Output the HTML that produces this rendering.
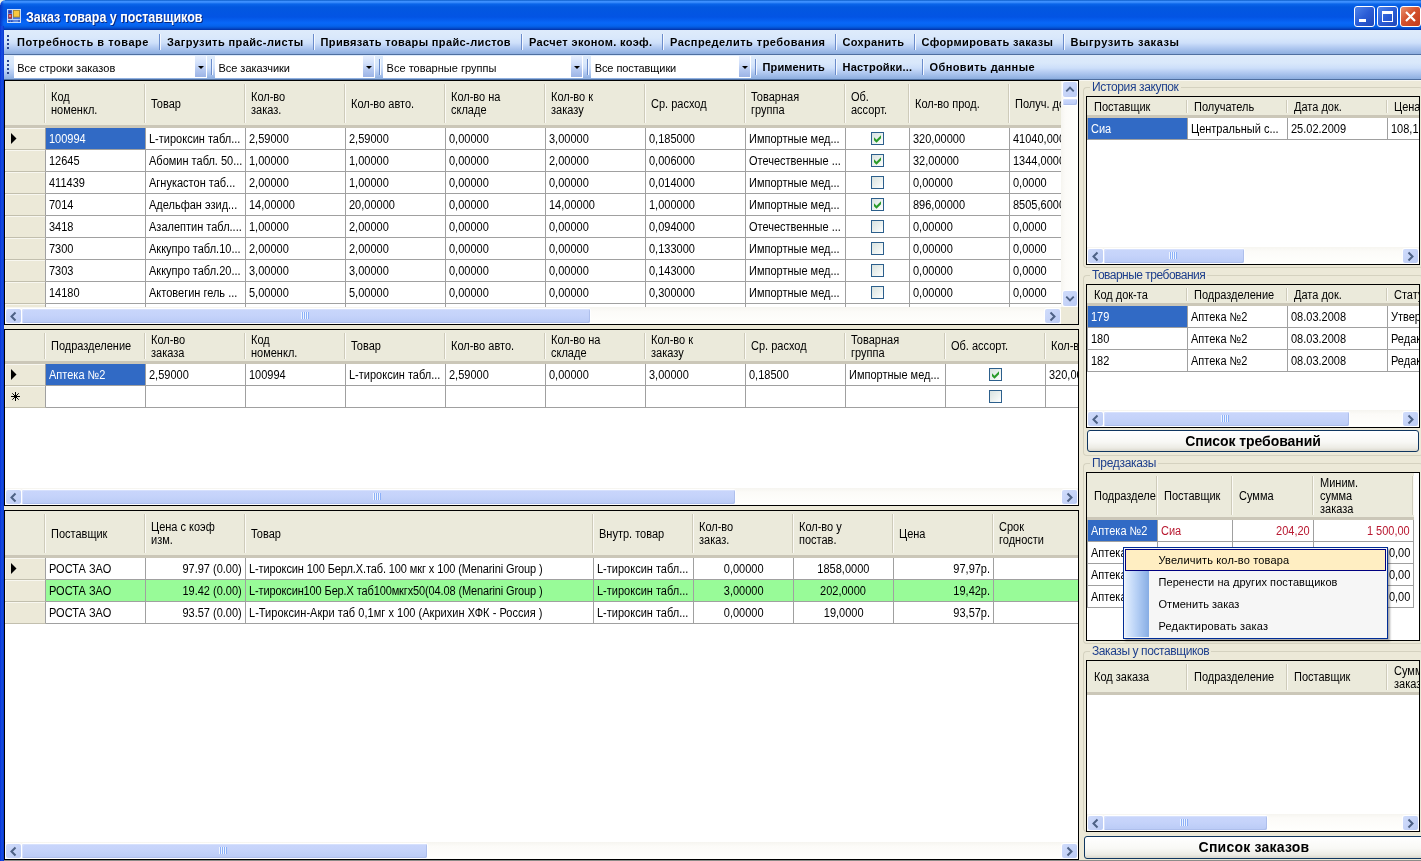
<!DOCTYPE html><html lang="ru"><head><meta charset="utf-8"><title>Заказ товара у поставщиков</title><style>
*{box-sizing:border-box;margin:0;padding:0}
html,body{width:1421px;height:861px;overflow:hidden;background:#ECE9D8}
body{position:relative;font-family:"Liberation Sans",sans-serif;font-size:11px;color:#000;line-height:13px}
.abs{position:absolute}
.sx{display:inline-block;font-size:12px;transform:scaleX(.9167);transform-origin:0 50%;white-space:inherit}
.r>.sx{transform-origin:100% 50%}
.m>.sx{transform-origin:50% 50%}
#w{position:absolute;left:0;top:0;width:1421px;height:861px;overflow:hidden;will-change:transform}
#title{left:0;top:0;width:1421px;height:30px;background:linear-gradient(to bottom,#0A5CC8 0,#3D90FF 1.5px,#3488FA 2.5px,#0A66EA 4px,#0258E0 7px,#0354E4 17px,#0868F8 23px,#0563EC 26px,#0450D0 28px,#0238B0 29.5px,#0238B0 30px)}
#title .txt{left:26px;top:9px;color:#fff;font-weight:bold;font-size:14px;line-height:17px;text-shadow:1px 1px 0 #0A2A80;white-space:nowrap;transform-origin:0 0}
#lb{left:0;top:26px;width:4px;height:835px;background:linear-gradient(to right,#0831D9 0,#1650E0 50%,#0A34D0 100%)}
.tb{left:4px;width:1417px;height:25px;background:linear-gradient(to bottom,#DEEBFB 0,#D9E8FB 8px,#CDDFFA 13px,#B5CCF2 17px,#9EBBE8 21px,#8DAEDF 24px,#4F6FA0 24px,#4F6FA0 25px)}
.tbi{font-weight:bold;white-space:nowrap;top:0;height:24px;line-height:24px;font-size:11px;transform-origin:0 50%}
.sep{width:2px;height:16px;top:4px;background:linear-gradient(to right,#6A8CCB 0,#6A8CCB 50%,#F4F8FF 50%,#F4F8FF 100%)}
.grip{width:2px;height:14px;left:3px;top:5px;background:repeating-linear-gradient(to bottom,#27418C 0,#27418C 2px,transparent 2px,transparent 4px)}
.grip:after{content:"";position:absolute;left:1px;top:1px;width:2px;height:14px;background:repeating-linear-gradient(to bottom,#F0F6FF 0,#F0F6FF 2px,transparent 2px,transparent 4px);z-index:-1}
.combo{top:1px;height:22px;background:#fff;line-height:25px;padding-left:4px;white-space:nowrap;font-size:11px}
.combo .btn{right:1px;top:0;width:11px;height:21px;background:linear-gradient(to bottom,#E6EFFE 0,#D2E0FA 35%,#B4C8F0 65%,#9CB4E6 100%);}
.combo .btn:after{content:"";position:absolute;left:3px;top:10px;border:3px solid transparent;border-top:3px solid #000;border-bottom:0}
.grid{background:#fff;border:1px solid #000;overflow:hidden}
.hdr{background:#EBEADB;border-bottom:3px solid;border-image:linear-gradient(to bottom,#E2DECD 0,#E2DECD 33%,#D6D2C2 33%,#D6D2C2 66%,#CBC7B8 66%,#CBC7B8 100%) 3;}
.hc{top:0;display:flex;align-items:center;padding:2px 0 0 5px;white-space:pre-line;overflow:hidden;line-height:13px}
.hc:after{content:"";position:absolute;right:0;top:3px;bottom:2px;width:2px;background:linear-gradient(to right,#CECBBA 0,#CECBBA 50%,#FBFAF5 50%,#FBFAF5 100%)}
.rh{background:#ECE9D8;border-right:1px solid #A0A0A0;border-bottom:1px solid #C2BFAE;box-shadow:inset 1px 1px 0 #F8F7F0}
.c{border-right:1px solid #A0A0A0;border-bottom:1px solid #A0A0A0;white-space:nowrap;overflow:hidden;padding:0 3px 0 3px;background:#fff}
.c.sel{background:#316AC5;color:#fff}
.c.r{text-align:right}
.c.m{text-align:center}
.c.g{background:#98FB98}
.c.w{letter-spacing:-0.05px}
.c.red{color:#B81830}
.cb{width:13px;height:13px;border:1px solid #2C5F8C;background:linear-gradient(135deg,#D8E2E0 0,#EEF3F1 60%,#fff 100%)}
.sb{background:linear-gradient(to bottom,#F6F5F0 0,#FCFBF8 25%,#FFFFFD 100%)}
.sb .a{width:15px;height:14px;top:2px;background:linear-gradient(135deg,#D0DCFB 0,#C4D2F7 60%,#BBCBF4 100%);border-radius:2px;box-shadow:0 0 0 1px #fff;display:flex;align-items:center;justify-content:center;overflow:hidden}
.sb .t{top:2px;height:14px;background:linear-gradient(to bottom,#C9D6FB 0,#C5D3FA 45%,#BACBF6 100%);border-radius:2px;box-shadow:0 0 0 1px #fff,inset -1px -1px 0 #AEBFEC,inset 1px 1px 0 #D6E0FC}
.sb.vsb{background:linear-gradient(to right,#F6F5F0 0,#FCFBF8 25%,#FFFFFD 100%)}
.sb.vsb .a{width:14px;height:15px;left:2px}
.sb.vsb .t{left:2px;width:14px}
.gbt{margin-top:1px;font-size:12px;color:#1E3F8C;white-space:nowrap;background:#ECE9D8;padding:0 2px;line-height:13px}
.gb{border:1px solid #D5D2C0;border-radius:4px;border-right:0}
.xb{height:23px;border:1px solid #0F3660;border-radius:3px;background:linear-gradient(to bottom,#fff 0,#F8F8F5 55%,#ECEBE4 85%,#DAD7CC 100%);font-weight:bold;font-size:14px;text-align:center;line-height:21px;white-space:nowrap}
</style></head><body><div id="w">
<div id="title" class="abs">
<svg class="abs" style="left:7px;top:9px" width="14" height="14" viewBox="0 0 14 14"><rect x="0.5" y="0.5" width="13" height="13" fill="#4A78E0" stroke="#C8DCF8"/><path d="M5.5 1V10M1 10.5H13" stroke="#BCD2F6" stroke-width="1" fill="none"/><rect x="1.5" y="1.5" width="3" height="2.5" fill="#3838A0"/><rect x="1.3" y="5" width="3.6" height="4.6" fill="#A83030"/><rect x="2.2" y="6" width="1.6" height="2.2" fill="#F09898"/><rect x="6.5" y="1.5" width="6" height="6.5" fill="#F8C840" stroke="#A88A28" stroke-width="0.8"/><rect x="1.5" y="11.5" width="1.5" height="1.4" fill="#2848A8"/><rect x="4" y="11.5" width="1.5" height="1.4" fill="#2848A8"/><rect x="6.5" y="11.5" width="4.5" height="1.4" fill="#6C90E0"/><rect x="11.6" y="10.8" width="0.9" height="2.2" fill="#2848A8"/></svg>
<div class="abs txt" id="ttxt" style="transform:scaleX(0.8916)">Заказ товара у поставщиков</div>
<div class="abs" style="left:1354px;top:6px;width:21px;height:21px;border:1px solid #fff;border-radius:3px;background:linear-gradient(135deg,#4F84EA 0,#2A5CD6 50%,#2048B8 100%)"><div class="abs" style="left:4px;top:12px;width:7px;height:3px;background:#fff"></div></div>
<div class="abs" style="left:1377px;top:6px;width:21px;height:21px;border:1px solid #fff;border-radius:3px;background:linear-gradient(135deg,#4F84EA 0,#2A5CD6 50%,#2048B8 100%)"><div class="abs" style="left:4px;top:4px;width:11px;height:11px;border:1px solid #fff;border-top:3px solid #fff"></div></div>
<div class="abs" style="left:1400px;top:6px;width:21px;height:21px;border:1px solid #fff;border-radius:3px;background:linear-gradient(135deg,#E9906E 0,#D4522E 45%,#C23A1C 100%)"><svg class="abs" style="left:0;top:0" width="19" height="19" viewBox="0 0 19 19"><path d="M5 5 L14 14 M14 5 L5 14" stroke="#fff" stroke-width="2.2" stroke-linecap="butt"/></svg></div>
</div>
<div class="abs" style="left:0;top:0;width:4px;height:30px;background:linear-gradient(to right,rgba(8,49,190,.9) 0,rgba(8,49,200,.35) 60%,rgba(8,49,217,0) 100%)"></div>
<div id="lb" class="abs"></div>
<div class="abs" style="left:0;top:0;width:5px;height:5px;background:radial-gradient(circle at 100% 100%,rgba(255,255,255,0) 4.2px,#EEF4EA 5.2px)"></div>
<div class="abs tb" style="top:30px">
<div class="abs grip"></div>
<div class="abs tbi" style="left:13.0px;letter-spacing:0.544px">Потребность в товаре</div>
<div class="abs sep" style="left:155px"></div>
<div class="abs tbi" style="left:163.0px;letter-spacing:0.393px">Загрузить прайс-листы</div>
<div class="abs sep" style="left:309px"></div>
<div class="abs tbi" style="left:316.5px;letter-spacing:0.377px">Привязать товары прайс-листов</div>
<div class="abs sep" style="left:517px"></div>
<div class="abs tbi" style="left:525.0px;letter-spacing:0.362px">Расчет эконом. коэф.</div>
<div class="abs sep" style="left:658px"></div>
<div class="abs tbi" style="left:666.0px;letter-spacing:0.451px">Распределить требования</div>
<div class="abs sep" style="left:831px"></div>
<div class="abs tbi" style="left:838.5px;letter-spacing:0.322px">Сохранить</div>
<div class="abs sep" style="left:910px"></div>
<div class="abs tbi" style="left:917.5px;letter-spacing:0.362px">Сформировать заказы</div>
<div class="abs sep" style="left:1059px"></div>
<div class="abs tbi" style="left:1066.5px;letter-spacing:0.564px">Выгрузить заказы</div>
</div>
<div class="abs tb" style="top:55px">
<div class="abs grip"></div>
<div class="abs combo" style="left:10px;width:193px;padding-left:3.2px;letter-spacing:0.012px">Все строки заказов<div class="abs btn"></div></div>
<div class="abs sep" style="left:207px"></div>
<div class="abs combo" style="left:211px;width:160px;padding-left:3.4px;letter-spacing:-0.010px">Все заказчики<div class="abs btn"></div></div>
<div class="abs sep" style="left:375px"></div>
<div class="abs combo" style="left:379px;width:200px;padding-left:3.6px;letter-spacing:0.017px">Все товарные группы<div class="abs btn"></div></div>
<div class="abs sep" style="left:583px"></div>
<div class="abs combo" style="left:587px;width:160px;padding-left:3.7px;letter-spacing:-0.080px">Все поставщики<div class="abs btn"></div></div>
<div class="abs sep" style="left:751px"></div>
<div class="abs tbi" style="left:758.5px;letter-spacing:0.144px">Применить</div>
<div class="abs sep" style="left:831px"></div>
<div class="abs tbi" style="left:838.5px;letter-spacing:0.225px">Настройки...</div>
<div class="abs sep" style="left:918px"></div>
<div class="abs tbi" style="left:925.5px;letter-spacing:0.410px">Обновить данные</div>
</div>
<div class="abs grid" style="left:4px;top:80px;width:1075px;height:245px">
<div class="abs hdr" style="left:0;top:0;width:1073px;height:47px">
<div class="abs hc" style="left:0;width:41px;height:44px"></div>
<div class="abs hc" style="left:41px;width:100px;height:44px"><span class="sx">Код
номенкл.</span></div>
<div class="abs hc" style="left:141px;width:100px;height:44px"><span class="sx">Товар</span></div>
<div class="abs hc" style="left:241px;width:100px;height:44px"><span class="sx">Кол-во
заказ.</span></div>
<div class="abs hc" style="left:341px;width:100px;height:44px"><span class="sx">Кол-во авто.</span></div>
<div class="abs hc" style="left:441px;width:100px;height:44px"><span class="sx">Кол-во на
складе</span></div>
<div class="abs hc" style="left:541px;width:100px;height:44px"><span class="sx">Кол-во к
заказу</span></div>
<div class="abs hc" style="left:641px;width:100px;height:44px"><span class="sx">Ср. расход</span></div>
<div class="abs hc" style="left:741px;width:100px;height:44px"><span class="sx">Товарная
группа</span></div>
<div class="abs hc" style="left:841px;width:64px;height:44px"><span class="sx">Об.
ассорт.</span></div>
<div class="abs hc" style="left:905px;width:100px;height:44px"><span class="sx">Кол-во прод.</span></div>
<div class="abs hc" style="left:1005px;width:100px;height:44px"><span class="sx">Получ. до</span></div>
</div>
<div class="abs rh" style="left:0;top:47px;width:41px;height:22px"><svg class="abs" style="left:6px;top:5px" width="6" height="11" viewBox="0 0 6 11"><path d="M0 0 L5.5 5.5 L0 11 Z" fill="#000"/></svg></div>
<div class="abs c sel" style="left:41px;top:47px;width:100px;height:22px;line-height:22px"><span class="sx">100994</span></div>
<div class="abs c" style="left:141px;top:47px;width:100px;height:22px;line-height:22px"><span class="sx">L-тироксин табл...</span></div>
<div class="abs c" style="left:241px;top:47px;width:100px;height:22px;line-height:22px"><span class="sx">2,59000</span></div>
<div class="abs c" style="left:341px;top:47px;width:100px;height:22px;line-height:22px"><span class="sx">2,59000</span></div>
<div class="abs c" style="left:441px;top:47px;width:100px;height:22px;line-height:22px"><span class="sx">0,00000</span></div>
<div class="abs c" style="left:541px;top:47px;width:100px;height:22px;line-height:22px"><span class="sx">3,00000</span></div>
<div class="abs c" style="left:641px;top:47px;width:100px;height:22px;line-height:22px"><span class="sx">0,185000</span></div>
<div class="abs c" style="left:741px;top:47px;width:100px;height:22px;line-height:22px"><span class="sx">Импортные мед...</span></div>
<div class="abs c" style="left:841px;top:47px;width:64px;height:22px;line-height:22px"><div class="abs cb" style="left:25px;top:4px"><svg class="abs" style="left:2px;top:2px" width="7" height="8" viewBox="0 0 7 8"><path d="M0 2.3 L2.5 4.8 L7 0.3 L7 3.3 L2.5 7.8 L0 5.3 Z" fill="#2A9A2A"/></svg></div></div>
<div class="abs c" style="left:905px;top:47px;width:100px;height:22px;line-height:22px"><span class="sx">320,00000</span></div>
<div class="abs c" style="left:1005px;top:47px;width:100px;height:22px;line-height:22px"><span class="sx">41040,0000</span></div>
<div class="abs rh" style="left:0;top:69px;width:41px;height:22px"></div>
<div class="abs c" style="left:41px;top:69px;width:100px;height:22px;line-height:22px"><span class="sx">12645</span></div>
<div class="abs c" style="left:141px;top:69px;width:100px;height:22px;line-height:22px"><span class="sx">Абомин табл. 50...</span></div>
<div class="abs c" style="left:241px;top:69px;width:100px;height:22px;line-height:22px"><span class="sx">1,00000</span></div>
<div class="abs c" style="left:341px;top:69px;width:100px;height:22px;line-height:22px"><span class="sx">1,00000</span></div>
<div class="abs c" style="left:441px;top:69px;width:100px;height:22px;line-height:22px"><span class="sx">0,00000</span></div>
<div class="abs c" style="left:541px;top:69px;width:100px;height:22px;line-height:22px"><span class="sx">2,00000</span></div>
<div class="abs c" style="left:641px;top:69px;width:100px;height:22px;line-height:22px"><span class="sx">0,006000</span></div>
<div class="abs c" style="left:741px;top:69px;width:100px;height:22px;line-height:22px"><span class="sx">Отечественные ...</span></div>
<div class="abs c" style="left:841px;top:69px;width:64px;height:22px;line-height:22px"><div class="abs cb" style="left:25px;top:4px"><svg class="abs" style="left:2px;top:2px" width="7" height="8" viewBox="0 0 7 8"><path d="M0 2.3 L2.5 4.8 L7 0.3 L7 3.3 L2.5 7.8 L0 5.3 Z" fill="#2A9A2A"/></svg></div></div>
<div class="abs c" style="left:905px;top:69px;width:100px;height:22px;line-height:22px"><span class="sx">32,00000</span></div>
<div class="abs c" style="left:1005px;top:69px;width:100px;height:22px;line-height:22px"><span class="sx">1344,0000</span></div>
<div class="abs rh" style="left:0;top:91px;width:41px;height:22px"></div>
<div class="abs c" style="left:41px;top:91px;width:100px;height:22px;line-height:22px"><span class="sx">411439</span></div>
<div class="abs c" style="left:141px;top:91px;width:100px;height:22px;line-height:22px"><span class="sx">Агнукастон таб...</span></div>
<div class="abs c" style="left:241px;top:91px;width:100px;height:22px;line-height:22px"><span class="sx">2,00000</span></div>
<div class="abs c" style="left:341px;top:91px;width:100px;height:22px;line-height:22px"><span class="sx">1,00000</span></div>
<div class="abs c" style="left:441px;top:91px;width:100px;height:22px;line-height:22px"><span class="sx">0,00000</span></div>
<div class="abs c" style="left:541px;top:91px;width:100px;height:22px;line-height:22px"><span class="sx">0,00000</span></div>
<div class="abs c" style="left:641px;top:91px;width:100px;height:22px;line-height:22px"><span class="sx">0,014000</span></div>
<div class="abs c" style="left:741px;top:91px;width:100px;height:22px;line-height:22px"><span class="sx">Импортные мед...</span></div>
<div class="abs c" style="left:841px;top:91px;width:64px;height:22px;line-height:22px"><div class="abs cb" style="left:25px;top:4px"></div></div>
<div class="abs c" style="left:905px;top:91px;width:100px;height:22px;line-height:22px"><span class="sx">0,00000</span></div>
<div class="abs c" style="left:1005px;top:91px;width:100px;height:22px;line-height:22px"><span class="sx">0,0000</span></div>
<div class="abs rh" style="left:0;top:113px;width:41px;height:22px"></div>
<div class="abs c" style="left:41px;top:113px;width:100px;height:22px;line-height:22px"><span class="sx">7014</span></div>
<div class="abs c" style="left:141px;top:113px;width:100px;height:22px;line-height:22px"><span class="sx">Адельфан эзид...</span></div>
<div class="abs c" style="left:241px;top:113px;width:100px;height:22px;line-height:22px"><span class="sx">14,00000</span></div>
<div class="abs c" style="left:341px;top:113px;width:100px;height:22px;line-height:22px"><span class="sx">20,00000</span></div>
<div class="abs c" style="left:441px;top:113px;width:100px;height:22px;line-height:22px"><span class="sx">0,00000</span></div>
<div class="abs c" style="left:541px;top:113px;width:100px;height:22px;line-height:22px"><span class="sx">14,00000</span></div>
<div class="abs c" style="left:641px;top:113px;width:100px;height:22px;line-height:22px"><span class="sx">1,000000</span></div>
<div class="abs c" style="left:741px;top:113px;width:100px;height:22px;line-height:22px"><span class="sx">Импортные мед...</span></div>
<div class="abs c" style="left:841px;top:113px;width:64px;height:22px;line-height:22px"><div class="abs cb" style="left:25px;top:4px"><svg class="abs" style="left:2px;top:2px" width="7" height="8" viewBox="0 0 7 8"><path d="M0 2.3 L2.5 4.8 L7 0.3 L7 3.3 L2.5 7.8 L0 5.3 Z" fill="#2A9A2A"/></svg></div></div>
<div class="abs c" style="left:905px;top:113px;width:100px;height:22px;line-height:22px"><span class="sx">896,00000</span></div>
<div class="abs c" style="left:1005px;top:113px;width:100px;height:22px;line-height:22px"><span class="sx">8505,6000</span></div>
<div class="abs rh" style="left:0;top:135px;width:41px;height:22px"></div>
<div class="abs c" style="left:41px;top:135px;width:100px;height:22px;line-height:22px"><span class="sx">3418</span></div>
<div class="abs c" style="left:141px;top:135px;width:100px;height:22px;line-height:22px"><span class="sx">Азалептин табл....</span></div>
<div class="abs c" style="left:241px;top:135px;width:100px;height:22px;line-height:22px"><span class="sx">1,00000</span></div>
<div class="abs c" style="left:341px;top:135px;width:100px;height:22px;line-height:22px"><span class="sx">2,00000</span></div>
<div class="abs c" style="left:441px;top:135px;width:100px;height:22px;line-height:22px"><span class="sx">0,00000</span></div>
<div class="abs c" style="left:541px;top:135px;width:100px;height:22px;line-height:22px"><span class="sx">0,00000</span></div>
<div class="abs c" style="left:641px;top:135px;width:100px;height:22px;line-height:22px"><span class="sx">0,094000</span></div>
<div class="abs c" style="left:741px;top:135px;width:100px;height:22px;line-height:22px"><span class="sx">Отечественные ...</span></div>
<div class="abs c" style="left:841px;top:135px;width:64px;height:22px;line-height:22px"><div class="abs cb" style="left:25px;top:4px"></div></div>
<div class="abs c" style="left:905px;top:135px;width:100px;height:22px;line-height:22px"><span class="sx">0,00000</span></div>
<div class="abs c" style="left:1005px;top:135px;width:100px;height:22px;line-height:22px"><span class="sx">0,0000</span></div>
<div class="abs rh" style="left:0;top:157px;width:41px;height:22px"></div>
<div class="abs c" style="left:41px;top:157px;width:100px;height:22px;line-height:22px"><span class="sx">7300</span></div>
<div class="abs c" style="left:141px;top:157px;width:100px;height:22px;line-height:22px"><span class="sx">Аккупро табл.10...</span></div>
<div class="abs c" style="left:241px;top:157px;width:100px;height:22px;line-height:22px"><span class="sx">2,00000</span></div>
<div class="abs c" style="left:341px;top:157px;width:100px;height:22px;line-height:22px"><span class="sx">2,00000</span></div>
<div class="abs c" style="left:441px;top:157px;width:100px;height:22px;line-height:22px"><span class="sx">0,00000</span></div>
<div class="abs c" style="left:541px;top:157px;width:100px;height:22px;line-height:22px"><span class="sx">0,00000</span></div>
<div class="abs c" style="left:641px;top:157px;width:100px;height:22px;line-height:22px"><span class="sx">0,133000</span></div>
<div class="abs c" style="left:741px;top:157px;width:100px;height:22px;line-height:22px"><span class="sx">Импортные мед...</span></div>
<div class="abs c" style="left:841px;top:157px;width:64px;height:22px;line-height:22px"><div class="abs cb" style="left:25px;top:4px"></div></div>
<div class="abs c" style="left:905px;top:157px;width:100px;height:22px;line-height:22px"><span class="sx">0,00000</span></div>
<div class="abs c" style="left:1005px;top:157px;width:100px;height:22px;line-height:22px"><span class="sx">0,0000</span></div>
<div class="abs rh" style="left:0;top:179px;width:41px;height:22px"></div>
<div class="abs c" style="left:41px;top:179px;width:100px;height:22px;line-height:22px"><span class="sx">7303</span></div>
<div class="abs c" style="left:141px;top:179px;width:100px;height:22px;line-height:22px"><span class="sx">Аккупро табл.20...</span></div>
<div class="abs c" style="left:241px;top:179px;width:100px;height:22px;line-height:22px"><span class="sx">3,00000</span></div>
<div class="abs c" style="left:341px;top:179px;width:100px;height:22px;line-height:22px"><span class="sx">3,00000</span></div>
<div class="abs c" style="left:441px;top:179px;width:100px;height:22px;line-height:22px"><span class="sx">0,00000</span></div>
<div class="abs c" style="left:541px;top:179px;width:100px;height:22px;line-height:22px"><span class="sx">0,00000</span></div>
<div class="abs c" style="left:641px;top:179px;width:100px;height:22px;line-height:22px"><span class="sx">0,143000</span></div>
<div class="abs c" style="left:741px;top:179px;width:100px;height:22px;line-height:22px"><span class="sx">Импортные мед...</span></div>
<div class="abs c" style="left:841px;top:179px;width:64px;height:22px;line-height:22px"><div class="abs cb" style="left:25px;top:4px"></div></div>
<div class="abs c" style="left:905px;top:179px;width:100px;height:22px;line-height:22px"><span class="sx">0,00000</span></div>
<div class="abs c" style="left:1005px;top:179px;width:100px;height:22px;line-height:22px"><span class="sx">0,0000</span></div>
<div class="abs rh" style="left:0;top:201px;width:41px;height:22px"></div>
<div class="abs c" style="left:41px;top:201px;width:100px;height:22px;line-height:22px"><span class="sx">14180</span></div>
<div class="abs c" style="left:141px;top:201px;width:100px;height:22px;line-height:22px"><span class="sx">Актовегин гель ...</span></div>
<div class="abs c" style="left:241px;top:201px;width:100px;height:22px;line-height:22px"><span class="sx">5,00000</span></div>
<div class="abs c" style="left:341px;top:201px;width:100px;height:22px;line-height:22px"><span class="sx">5,00000</span></div>
<div class="abs c" style="left:441px;top:201px;width:100px;height:22px;line-height:22px"><span class="sx">0,00000</span></div>
<div class="abs c" style="left:541px;top:201px;width:100px;height:22px;line-height:22px"><span class="sx">0,00000</span></div>
<div class="abs c" style="left:641px;top:201px;width:100px;height:22px;line-height:22px"><span class="sx">0,300000</span></div>
<div class="abs c" style="left:741px;top:201px;width:100px;height:22px;line-height:22px"><span class="sx">Импортные мед...</span></div>
<div class="abs c" style="left:841px;top:201px;width:64px;height:22px;line-height:22px"><div class="abs cb" style="left:25px;top:4px"></div></div>
<div class="abs c" style="left:905px;top:201px;width:100px;height:22px;line-height:22px"><span class="sx">0,00000</span></div>
<div class="abs c" style="left:1005px;top:201px;width:100px;height:22px;line-height:22px"><span class="sx">0,0000</span></div>
<div class="abs rh" style="left:0;top:223px;width:41px;height:22px"></div>
<div class="abs c" style="left:41px;top:223px;width:100px;height:22px;line-height:22px"></div>
<div class="abs c" style="left:141px;top:223px;width:100px;height:22px;line-height:22px"></div>
<div class="abs c" style="left:241px;top:223px;width:100px;height:22px;line-height:22px"></div>
<div class="abs c" style="left:341px;top:223px;width:100px;height:22px;line-height:22px"></div>
<div class="abs c" style="left:441px;top:223px;width:100px;height:22px;line-height:22px"></div>
<div class="abs c" style="left:541px;top:223px;width:100px;height:22px;line-height:22px"></div>
<div class="abs c" style="left:641px;top:223px;width:100px;height:22px;line-height:22px"></div>
<div class="abs c" style="left:741px;top:223px;width:100px;height:22px;line-height:22px"></div>
<div class="abs c" style="left:841px;top:223px;width:64px;height:22px;line-height:22px"></div>
<div class="abs c" style="left:905px;top:223px;width:100px;height:22px;line-height:22px"></div>
<div class="abs c" style="left:1005px;top:223px;width:100px;height:22px;line-height:22px"></div>
<div class="abs sb vsb" style="left:1056px;top:0;width:17px;height:226px">
<div class="abs a" style="top:1px"><svg width="15" height="15" viewBox="0 0 15 15"><path d="M3.5 9.5 L7.5 5.5 L11.5 9.5" fill="none" stroke="#4D6185" stroke-width="2"/></svg></div>
<div class="abs t" style="top:18px;height:6px"></div>
<div class="abs a" style="top:210px"><svg width="15" height="15" viewBox="0 0 15 15"><path d="M3.5 5.5 L7.5 9.5 L11.5 5.5" fill="none" stroke="#4D6185" stroke-width="2"/></svg></div>
</div>
<div class="abs" style="left:1056px;top:226px;width:17px;height:17px;background:#ECE9D8"></div>
<div class="abs sb" style="left:0px;top:226px;width:1056px;height:17px"><div class="abs a" style="left:1px"><svg width="15" height="15" viewBox="0 0 15 15"><path d="M9.5 3.5 L5.5 7.5 L9.5 11.5" fill="none" stroke="#4D6185" stroke-width="2"/></svg></div><div class="abs a" style="left:1040px"><svg width="15" height="15" viewBox="0 0 15 15"><path d="M5.5 3.5 L9.5 7.5 L5.5 11.5" fill="none" stroke="#4D6185" stroke-width="2"/></svg></div><div class="abs t" style="left:17px;width:568px"><div class="abs" style="left:279px;top:3px;width:8px;height:7px;background:repeating-linear-gradient(to right,#EEF4FE 0,#EEF4FE 1px,#8CB0F8 1px,#8CB0F8 2px)"></div></div></div>

</div>
<div class="abs grid" style="left:4px;top:329px;width:1075px;height:177px">
<div class="abs hdr" style="left:0;top:0;width:1073px;height:34px">
<div class="abs hc" style="left:0;width:41px;height:31px"></div>
<div class="abs hc" style="left:41px;width:100px;height:31px"><span class="sx">Подразделение</span></div>
<div class="abs hc" style="left:141px;width:100px;height:31px"><span class="sx">Кол-во
заказа</span></div>
<div class="abs hc" style="left:241px;width:100px;height:31px"><span class="sx">Код
номенкл.</span></div>
<div class="abs hc" style="left:341px;width:100px;height:31px"><span class="sx">Товар</span></div>
<div class="abs hc" style="left:441px;width:100px;height:31px"><span class="sx">Кол-во авто.</span></div>
<div class="abs hc" style="left:541px;width:100px;height:31px"><span class="sx">Кол-во на
складе</span></div>
<div class="abs hc" style="left:641px;width:100px;height:31px"><span class="sx">Кол-во к
заказу</span></div>
<div class="abs hc" style="left:741px;width:100px;height:31px"><span class="sx">Ср. расход</span></div>
<div class="abs hc" style="left:841px;width:100px;height:31px"><span class="sx">Товарная
группа</span></div>
<div class="abs hc" style="left:941px;width:100px;height:31px"><span class="sx">Об. ассорт.</span></div>
<div class="abs hc" style="left:1041px;width:100px;height:31px"><span class="sx">Кол-во прод.</span></div>
</div>
<div class="abs rh" style="left:0;top:34px;width:41px;height:22px"><svg class="abs" style="left:6px;top:5px" width="6" height="11" viewBox="0 0 6 11"><path d="M0 0 L5.5 5.5 L0 11 Z" fill="#000"/></svg></div>
<div class="abs c sel" style="left:41px;top:34px;width:100px;height:22px;line-height:22px"><span class="sx">Аптека №2</span></div>
<div class="abs c" style="left:141px;top:34px;width:100px;height:22px;line-height:22px"><span class="sx">2,59000</span></div>
<div class="abs c" style="left:241px;top:34px;width:100px;height:22px;line-height:22px"><span class="sx">100994</span></div>
<div class="abs c" style="left:341px;top:34px;width:100px;height:22px;line-height:22px"><span class="sx">L-тироксин табл...</span></div>
<div class="abs c" style="left:441px;top:34px;width:100px;height:22px;line-height:22px"><span class="sx">2,59000</span></div>
<div class="abs c" style="left:541px;top:34px;width:100px;height:22px;line-height:22px"><span class="sx">0,00000</span></div>
<div class="abs c" style="left:641px;top:34px;width:100px;height:22px;line-height:22px"><span class="sx">3,00000</span></div>
<div class="abs c" style="left:741px;top:34px;width:100px;height:22px;line-height:22px"><span class="sx">0,18500</span></div>
<div class="abs c" style="left:841px;top:34px;width:100px;height:22px;line-height:22px"><span class="sx">Импортные мед...</span></div>
<div class="abs c" style="left:941px;top:34px;width:100px;height:22px;line-height:22px"><div class="abs cb" style="left:43px;top:4px"><svg class="abs" style="left:2px;top:2px" width="7" height="8" viewBox="0 0 7 8"><path d="M0 2.3 L2.5 4.8 L7 0.3 L7 3.3 L2.5 7.8 L0 5.3 Z" fill="#2A9A2A"/></svg></div></div>
<div class="abs c" style="left:1041px;top:34px;width:100px;height:22px;line-height:22px"><span class="sx">320,00000</span></div>
<div class="abs rh" style="left:0;top:56px;width:41px;height:22px"><svg class="abs" style="left:6px;top:6px" width="9" height="9" viewBox="0 0 9 9"><path d="M4.5 0V9M0 4.5H9M1.3 1.3L7.7 7.7M7.7 1.3L1.3 7.7" stroke="#000" stroke-width="1"/></svg></div>
<div class="abs c" style="left:41px;top:56px;width:100px;height:22px;line-height:22px"></div>
<div class="abs c" style="left:141px;top:56px;width:100px;height:22px;line-height:22px"></div>
<div class="abs c" style="left:241px;top:56px;width:100px;height:22px;line-height:22px"></div>
<div class="abs c" style="left:341px;top:56px;width:100px;height:22px;line-height:22px"></div>
<div class="abs c" style="left:441px;top:56px;width:100px;height:22px;line-height:22px"></div>
<div class="abs c" style="left:541px;top:56px;width:100px;height:22px;line-height:22px"></div>
<div class="abs c" style="left:641px;top:56px;width:100px;height:22px;line-height:22px"></div>
<div class="abs c" style="left:741px;top:56px;width:100px;height:22px;line-height:22px"></div>
<div class="abs c" style="left:841px;top:56px;width:100px;height:22px;line-height:22px"></div>
<div class="abs c" style="left:941px;top:56px;width:100px;height:22px;line-height:22px"><div class="abs cb" style="left:43px;top:4px"></div></div>
<div class="abs c" style="left:1041px;top:56px;width:100px;height:22px;line-height:22px"></div>
<div class="abs sb" style="left:0px;top:158px;width:1073px;height:17px"><div class="abs a" style="left:1px"><svg width="15" height="15" viewBox="0 0 15 15"><path d="M9.5 3.5 L5.5 7.5 L9.5 11.5" fill="none" stroke="#4D6185" stroke-width="2"/></svg></div><div class="abs a" style="left:1057px"><svg width="15" height="15" viewBox="0 0 15 15"><path d="M5.5 3.5 L9.5 7.5 L5.5 11.5" fill="none" stroke="#4D6185" stroke-width="2"/></svg></div><div class="abs t" style="left:17px;width:713px"><div class="abs" style="left:351px;top:3px;width:8px;height:7px;background:repeating-linear-gradient(to right,#EEF4FE 0,#EEF4FE 1px,#8CB0F8 1px,#8CB0F8 2px)"></div></div></div>

</div>
<div class="abs grid" style="left:4px;top:510px;width:1075px;height:350px">
<div class="abs hdr" style="left:0;top:0;width:1073px;height:47px">
<div class="abs hc" style="left:0;width:41px;height:44px"></div>
<div class="abs hc" style="left:41px;width:100px;height:44px"><span class="sx">Поставщик</span></div>
<div class="abs hc" style="left:141px;width:100px;height:44px"><span class="sx">Цена с коэф
изм.</span></div>
<div class="abs hc" style="left:241px;width:348px;height:44px"><span class="sx">Товар</span></div>
<div class="abs hc" style="left:589px;width:100px;height:44px"><span class="sx">Внутр. товар</span></div>
<div class="abs hc" style="left:689px;width:100px;height:44px"><span class="sx">Кол-во
заказ.</span></div>
<div class="abs hc" style="left:789px;width:100px;height:44px"><span class="sx">Кол-во у
постав.</span></div>
<div class="abs hc" style="left:889px;width:100px;height:44px"><span class="sx">Цена</span></div>
<div class="abs hc" style="left:989px;width:100px;height:44px"><span class="sx">Срок
годности</span></div>
</div>
<div class="abs rh" style="left:0;top:47px;width:41px;height:22px"><svg class="abs" style="left:6px;top:5px" width="6" height="11" viewBox="0 0 6 11"><path d="M0 0 L5.5 5.5 L0 11 Z" fill="#000"/></svg></div>
<div class="abs c" style="left:41px;top:47px;width:100px;height:22px;line-height:22px"><span class="sx">РОСТА ЗАО</span></div>
<div class="abs c r" style="left:141px;top:47px;width:100px;height:22px;line-height:22px"><span class="sx">97.97 (0.00)</span></div>
<div class="abs c" style="left:241px;top:47px;width:348px;height:22px;line-height:22px"><span class="sx cal" style="letter-spacing:-0.117px">L-тироксин 100 Берл.Х.таб. 100 мкг х 100 (Menarini Group )</span></div>
<div class="abs c" style="left:589px;top:47px;width:100px;height:22px;line-height:22px"><span class="sx">L-тироксин табл...</span></div>
<div class="abs c m" style="left:689px;top:47px;width:100px;height:22px;line-height:22px"><span class="sx">0,00000</span></div>
<div class="abs c m" style="left:789px;top:47px;width:100px;height:22px;line-height:22px"><span class="sx">1858,0000</span></div>
<div class="abs c r" style="left:889px;top:47px;width:100px;height:22px;line-height:22px"><span class="sx">97,97р.</span></div>
<div class="abs c" style="left:989px;top:47px;width:100px;height:22px;line-height:22px"></div>
<div class="abs rh" style="left:0;top:69px;width:41px;height:22px"></div>
<div class="abs c g" style="left:41px;top:69px;width:100px;height:22px;line-height:22px"><span class="sx">РОСТА ЗАО</span></div>
<div class="abs c r g" style="left:141px;top:69px;width:100px;height:22px;line-height:22px"><span class="sx">19.42 (0.00)</span></div>
<div class="abs c g" style="left:241px;top:69px;width:348px;height:22px;line-height:22px"><span class="sx cal" style="letter-spacing:-0.135px">L-тироксин100 Бер.Х таб100мкгх50(04.08 (Menarini Group )</span></div>
<div class="abs c g" style="left:589px;top:69px;width:100px;height:22px;line-height:22px"><span class="sx">L-тироксин табл...</span></div>
<div class="abs c m g" style="left:689px;top:69px;width:100px;height:22px;line-height:22px"><span class="sx">3,00000</span></div>
<div class="abs c m g" style="left:789px;top:69px;width:100px;height:22px;line-height:22px"><span class="sx">202,0000</span></div>
<div class="abs c r g" style="left:889px;top:69px;width:100px;height:22px;line-height:22px"><span class="sx">19,42р.</span></div>
<div class="abs c g" style="left:989px;top:69px;width:100px;height:22px;line-height:22px"></div>
<div class="abs rh" style="left:0;top:91px;width:41px;height:22px"></div>
<div class="abs c" style="left:41px;top:91px;width:100px;height:22px;line-height:22px"><span class="sx">РОСТА ЗАО</span></div>
<div class="abs c r" style="left:141px;top:91px;width:100px;height:22px;line-height:22px"><span class="sx">93.57 (0.00)</span></div>
<div class="abs c" style="left:241px;top:91px;width:348px;height:22px;line-height:22px"><span class="sx cal" style="letter-spacing:0.037px">L-Тироксин-Акри таб 0,1мг х 100 (Акрихин ХФК - Россия )</span></div>
<div class="abs c" style="left:589px;top:91px;width:100px;height:22px;line-height:22px"><span class="sx">L-тироксин табл...</span></div>
<div class="abs c m" style="left:689px;top:91px;width:100px;height:22px;line-height:22px"><span class="sx">0,00000</span></div>
<div class="abs c m" style="left:789px;top:91px;width:100px;height:22px;line-height:22px"><span class="sx">19,0000</span></div>
<div class="abs c r" style="left:889px;top:91px;width:100px;height:22px;line-height:22px"><span class="sx">93,57р.</span></div>
<div class="abs c" style="left:989px;top:91px;width:100px;height:22px;line-height:22px"></div>
<div class="abs sb" style="left:0px;top:331px;width:1073px;height:17px"><div class="abs a" style="left:1px"><svg width="15" height="15" viewBox="0 0 15 15"><path d="M9.5 3.5 L5.5 7.5 L9.5 11.5" fill="none" stroke="#4D6185" stroke-width="2"/></svg></div><div class="abs a" style="left:1057px"><svg width="15" height="15" viewBox="0 0 15 15"><path d="M5.5 3.5 L9.5 7.5 L5.5 11.5" fill="none" stroke="#4D6185" stroke-width="2"/></svg></div><div class="abs t" style="left:17px;width:405px"><div class="abs" style="left:197px;top:3px;width:8px;height:7px;background:repeating-linear-gradient(to right,#EEF4FE 0,#EEF4FE 1px,#8CB0F8 1px,#8CB0F8 2px)"></div></div></div>

</div>
<div class="abs" style="left:1079px;top:80px;width:342px;height:1px;background:#F8F7F1"></div>
<div class="abs gb" style="left:1083px;top:87px;width:340px;height:181px"></div>
<div class="abs gbt" style="left:1090px;top:80px;letter-spacing:-0.357px">История закупок</div>
<div class="abs grid" style="left:1086px;top:96px;width:334px;height:169px">
<div class="abs hdr" style="left:0;top:0;width:332px;height:21px">
<div class="abs hc" style="left:1px;width:100px;height:18px;padding-left:6px"><span class="sx">Поставщик</span></div>
<div class="abs hc" style="left:101px;width:100px;height:18px;padding-left:6px"><span class="sx">Получатель</span></div>
<div class="abs hc" style="left:201px;width:100px;height:18px;padding-left:6px"><span class="sx">Дата док.</span></div>
<div class="abs hc" style="left:301px;width:100px;height:18px;padding-left:6px"><span class="sx">Цена</span></div>
</div>
<div class="abs" style="left:0;top:21px;width:1px;height:22px;background:#A0A0A0"></div>
<div class="abs c sel" style="left:1px;top:21px;width:100px;height:22px;line-height:22px"><span class="sx">Сиа</span></div>
<div class="abs c" style="left:101px;top:21px;width:100px;height:22px;line-height:22px"><span class="sx">Центральный с...</span></div>
<div class="abs c" style="left:201px;top:21px;width:100px;height:22px;line-height:22px"><span class="sx">25.02.2009</span></div>
<div class="abs c" style="left:301px;top:21px;width:100px;height:22px;line-height:22px"><span class="sx">108,1</span></div>
<div class="abs sb" style="left:0px;top:150px;width:332px;height:17px"><div class="abs a" style="left:1px"><svg width="15" height="15" viewBox="0 0 15 15"><path d="M9.5 3.5 L5.5 7.5 L9.5 11.5" fill="none" stroke="#4D6185" stroke-width="2"/></svg></div><div class="abs a" style="left:316px"><svg width="15" height="15" viewBox="0 0 15 15"><path d="M5.5 3.5 L9.5 7.5 L5.5 11.5" fill="none" stroke="#4D6185" stroke-width="2"/></svg></div><div class="abs t" style="left:17px;width:140px"><div class="abs" style="left:65px;top:3px;width:8px;height:7px;background:repeating-linear-gradient(to right,#EEF4FE 0,#EEF4FE 1px,#8CB0F8 1px,#8CB0F8 2px)"></div></div></div>

</div>
<div class="abs gb" style="left:1083px;top:275px;width:340px;height:181px"></div>
<div class="abs gbt" style="left:1090px;top:268px;letter-spacing:-0.506px">Товарные требования</div>
<div class="abs grid" style="left:1086px;top:284px;width:334px;height:144px">
<div class="abs hdr" style="left:0;top:0;width:332px;height:21px">
<div class="abs hc" style="left:1px;width:100px;height:18px;padding-left:6px"><span class="sx">Код док-та</span></div>
<div class="abs hc" style="left:101px;width:100px;height:18px;padding-left:6px"><span class="sx">Подразделение</span></div>
<div class="abs hc" style="left:201px;width:100px;height:18px;padding-left:6px"><span class="sx">Дата док.</span></div>
<div class="abs hc" style="left:301px;width:100px;height:18px;padding-left:6px"><span class="sx">Статус</span></div>
</div>
<div class="abs" style="left:0;top:21px;width:1px;height:22px;background:#A0A0A0"></div>
<div class="abs c sel" style="left:1px;top:21px;width:100px;height:22px;line-height:22px"><span class="sx">179</span></div>
<div class="abs c" style="left:101px;top:21px;width:100px;height:22px;line-height:22px"><span class="sx">Аптека №2</span></div>
<div class="abs c" style="left:201px;top:21px;width:100px;height:22px;line-height:22px"><span class="sx">08.03.2008</span></div>
<div class="abs c" style="left:301px;top:21px;width:100px;height:22px;line-height:22px"><span class="sx">Утверж</span></div>
<div class="abs" style="left:0;top:43px;width:1px;height:22px;background:#A0A0A0"></div>
<div class="abs c" style="left:1px;top:43px;width:100px;height:22px;line-height:22px"><span class="sx">180</span></div>
<div class="abs c" style="left:101px;top:43px;width:100px;height:22px;line-height:22px"><span class="sx">Аптека №2</span></div>
<div class="abs c" style="left:201px;top:43px;width:100px;height:22px;line-height:22px"><span class="sx">08.03.2008</span></div>
<div class="abs c" style="left:301px;top:43px;width:100px;height:22px;line-height:22px"><span class="sx">Редакт</span></div>
<div class="abs" style="left:0;top:65px;width:1px;height:22px;background:#A0A0A0"></div>
<div class="abs c" style="left:1px;top:65px;width:100px;height:22px;line-height:22px"><span class="sx">182</span></div>
<div class="abs c" style="left:101px;top:65px;width:100px;height:22px;line-height:22px"><span class="sx">Аптека №2</span></div>
<div class="abs c" style="left:201px;top:65px;width:100px;height:22px;line-height:22px"><span class="sx">08.03.2008</span></div>
<div class="abs c" style="left:301px;top:65px;width:100px;height:22px;line-height:22px"><span class="sx">Редакт</span></div>
<div class="abs sb" style="left:0px;top:125px;width:332px;height:17px"><div class="abs a" style="left:1px"><svg width="15" height="15" viewBox="0 0 15 15"><path d="M9.5 3.5 L5.5 7.5 L9.5 11.5" fill="none" stroke="#4D6185" stroke-width="2"/></svg></div><div class="abs a" style="left:316px"><svg width="15" height="15" viewBox="0 0 15 15"><path d="M5.5 3.5 L9.5 7.5 L5.5 11.5" fill="none" stroke="#4D6185" stroke-width="2"/></svg></div><div class="abs t" style="left:17px;width:245px"><div class="abs" style="left:117px;top:3px;width:8px;height:7px;background:repeating-linear-gradient(to right,#EEF4FE 0,#EEF4FE 1px,#8CB0F8 1px,#8CB0F8 2px)"></div></div></div>

</div>
<div class="abs xb" style="left:1087px;top:430px;width:332px;height:22px;line-height:20px;letter-spacing:-0.053px">Список требований</div>
<div class="abs gb" style="left:1083px;top:463px;width:340px;height:181px"></div>
<div class="abs gbt" style="left:1090px;top:456px;letter-spacing:-0.308px">Предзаказы</div>
<div class="abs grid" style="left:1086px;top:472px;width:334px;height:169px">
<div class="abs hdr" style="left:0;top:0;width:327px;height:47px">
<div class="abs hc" style="left:1px;width:70px;height:44px;padding-left:6px"><span class="sx">Подразделение</span></div>
<div class="abs hc" style="left:71px;width:75px;height:44px;padding-left:6px"><span class="sx">Поставщик</span></div>
<div class="abs hc" style="left:146px;width:81px;height:44px;padding-left:6px"><span class="sx">Сумма</span></div>
<div class="abs hc" style="left:227px;width:100px;height:44px;padding-left:6px"><span class="sx">Миним.
сумма
заказа</span></div>
</div>
<div class="abs" style="left:0;top:47px;width:1px;height:22px;background:#A0A0A0"></div>
<div class="abs c sel" style="left:1px;top:47px;width:70px;height:22px;line-height:22px"><span class="sx">Аптека №2</span></div>
<div class="abs c red" style="left:71px;top:47px;width:75px;height:22px;line-height:22px"><span class="sx">Сиа</span></div>
<div class="abs c r red" style="left:146px;top:47px;width:81px;height:22px;line-height:22px"><span class="sx">204,20</span></div>
<div class="abs c r red" style="left:227px;top:47px;width:100px;height:22px;line-height:22px"><span class="sx">1 500,00</span></div>
<div class="abs" style="left:0;top:69px;width:1px;height:22px;background:#A0A0A0"></div>
<div class="abs c" style="left:1px;top:69px;width:70px;height:22px;line-height:22px"><span class="sx">Аптека №2</span></div>
<div class="abs c" style="left:71px;top:69px;width:75px;height:22px;line-height:22px"></div>
<div class="abs c r" style="left:146px;top:69px;width:81px;height:22px;line-height:22px"></div>
<div class="abs c r" style="left:227px;top:69px;width:100px;height:22px;line-height:22px"><span class="sx">0,00</span></div>
<div class="abs" style="left:0;top:91px;width:1px;height:22px;background:#A0A0A0"></div>
<div class="abs c" style="left:1px;top:91px;width:70px;height:22px;line-height:22px"><span class="sx">Аптека №2</span></div>
<div class="abs c" style="left:71px;top:91px;width:75px;height:22px;line-height:22px"></div>
<div class="abs c r" style="left:146px;top:91px;width:81px;height:22px;line-height:22px"></div>
<div class="abs c r" style="left:227px;top:91px;width:100px;height:22px;line-height:22px"><span class="sx">0,00</span></div>
<div class="abs" style="left:0;top:113px;width:1px;height:22px;background:#A0A0A0"></div>
<div class="abs c" style="left:1px;top:113px;width:70px;height:22px;line-height:22px"><span class="sx">Аптека №2</span></div>
<div class="abs c" style="left:71px;top:113px;width:75px;height:22px;line-height:22px"></div>
<div class="abs c r" style="left:146px;top:113px;width:81px;height:22px;line-height:22px"></div>
<div class="abs c r" style="left:227px;top:113px;width:100px;height:22px;line-height:22px"><span class="sx">0,00</span></div>

</div>
<div class="abs gb" style="left:1083px;top:651px;width:340px;height:181px"></div>
<div class="abs gbt" style="left:1090px;top:644px;letter-spacing:-0.409px">Заказы у поставщиков</div>
<div class="abs grid" style="left:1086px;top:660px;width:334px;height:172px">
<div class="abs hdr" style="left:0;top:0;width:332px;height:34px">
<div class="abs hc" style="left:1px;width:100px;height:31px;padding-left:6px"><span class="sx">Код заказа</span></div>
<div class="abs hc" style="left:101px;width:100px;height:31px;padding-left:6px"><span class="sx">Подразделение</span></div>
<div class="abs hc" style="left:201px;width:100px;height:31px;padding-left:6px"><span class="sx">Поставщик</span></div>
<div class="abs hc" style="left:301px;width:100px;height:31px;padding-left:6px"><span class="sx">Сумма
заказа</span></div>
</div>
<div class="abs sb" style="left:0px;top:153px;width:332px;height:17px"><div class="abs a" style="left:1px"><svg width="15" height="15" viewBox="0 0 15 15"><path d="M9.5 3.5 L5.5 7.5 L9.5 11.5" fill="none" stroke="#4D6185" stroke-width="2"/></svg></div><div class="abs a" style="left:316px"><svg width="15" height="15" viewBox="0 0 15 15"><path d="M5.5 3.5 L9.5 7.5 L5.5 11.5" fill="none" stroke="#4D6185" stroke-width="2"/></svg></div><div class="abs t" style="left:17px;width:163px"><div class="abs" style="left:76px;top:3px;width:8px;height:7px;background:repeating-linear-gradient(to right,#EEF4FE 0,#EEF4FE 1px,#8CB0F8 1px,#8CB0F8 2px)"></div></div></div>

</div>
<div class="abs xb" style="left:1084px;top:836px;width:340px;letter-spacing:0.228px">Список заказов</div>
<div class="abs" style="left:1123px;top:547px;width:265px;height:92px;background:#F6F6F6;border:1px solid #002D96;box-shadow:2px 2px 2px rgba(0,0,0,.35)">
<div class="abs" style="left:1px;top:1px;width:24px;height:88px;background:linear-gradient(to right,#E3EFFF 0,#B5CFF5 50%,#87ADE4 100%)"></div>
<div class="abs" style="left:1px;top:1px;width:261px;height:22px;background:#FFEEC2;border:1px solid #000080"></div>
<div class="abs mi" style="left:34.5px;top:1px;line-height:22px;white-space:nowrap;letter-spacing:0.165px">Увеличить кол-во товара</div>
<div class="abs mi" style="left:34.5px;top:23px;line-height:22px;white-space:nowrap;letter-spacing:0.077px">Перенести на других поставщиков</div>
<div class="abs mi" style="left:34.5px;top:45px;line-height:22px;white-space:nowrap;letter-spacing:0.023px">Отменить заказ</div>
<div class="abs mi" style="left:34.5px;top:67px;line-height:22px;white-space:nowrap;letter-spacing:0.179px">Редактировать заказ</div>
</div>
<div class="abs" style="left:4px;top:860px;width:1417px;height:1px;background:#8C8C88"></div>
</div></body></html>
